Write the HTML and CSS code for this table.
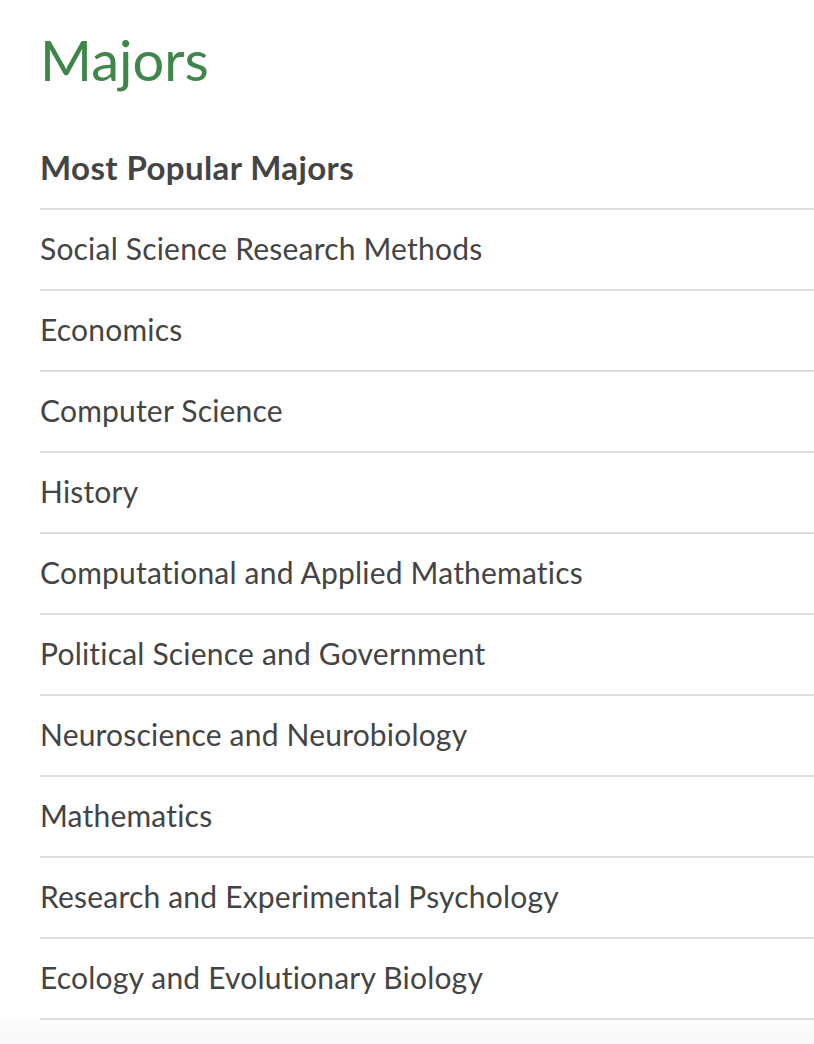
FILE: index.html
```html
<!DOCTYPE html>
<html>
<head>
<meta charset="utf-8">
<link rel="stylesheet" href="styles.css">
</head>
<body>
<main class="page">
  <h1 class="title">Majors</h1>
  <section class="majors">
    <h2 class="majors-head">Most Popular Majors</h2>
    <ul class="majors-list">
      <li class="major">Social Science Research Methods</li>
      <li class="major">Economics</li>
      <li class="major">Computer Science</li>
      <li class="major">History</li>
      <li class="major">Computational and Applied Mathematics</li>
      <li class="major">Political Science and Government</li>
      <li class="major">Neuroscience and Neurobiology</li>
      <li class="major">Mathematics</li>
      <li class="major">Research and Experimental Psychology</li>
      <li class="major">Ecology and Evolutionary Biology</li>
    </ul>
  </section>
</main>
<footer class="after"></footer>
</body>
</html>
```
FILE: styles.css
```css
html, body {
  margin: 0;
  padding: 0;
  background: #fff;
}
body {
  font-family: "Lato", "Liberation Sans", sans-serif;
  font-variant-ligatures: none;
  color: #444;
}
.page {
  padding-left: 40px;
}
.title {
  margin: 0;
  height: 129px;
  box-sizing: border-box;
  padding-top: 22px;
  font-size: 56px;
  font-weight: 400;
  line-height: 76px;
  color: #3e864a;
}
.majors-head {
  margin: 0;
  height: 81px;
  box-sizing: border-box;
  padding-bottom: 3px;
  border-bottom: 2px solid #ddd;
  display: flex;
  align-items: center;
  font-size: 33px;
  font-weight: 700;
  letter-spacing: 0.4px;
  color: #444;
}
.majors-list {
  list-style: none;
  margin: 0;
  padding: 0;
}
.major {
  height: 81px;
  box-sizing: border-box;
  padding-bottom: 3px;
  border-bottom: 2px solid #ddd;
  display: flex;
  align-items: center;
  font-size: 30px;
  letter-spacing: 0.2px;
  color: #444;
}
.after {
  height: 40px;
  background: linear-gradient(#fbfbfb, #f6f6f6);
}
```
